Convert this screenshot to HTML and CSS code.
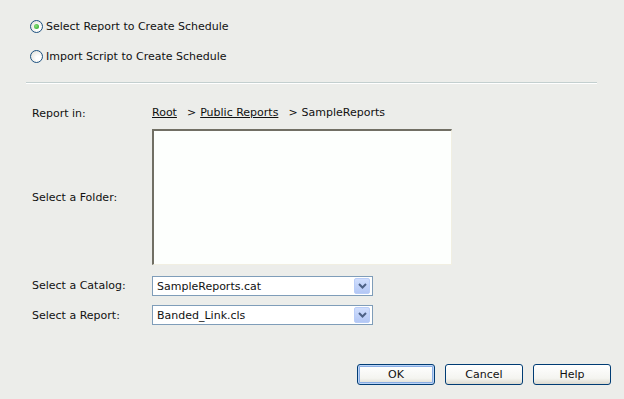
FILE: index.html
```html
<!DOCTYPE html>
<html lang="en">
<head>
  <meta charset="UTF-8" />
  <title>Create Schedule</title>
  <link rel="stylesheet" href="styles.css">
</head>
<body>

  <div class="choices">
    <label class="choice"><input type="radio" name="mode" checked> Select Report to Create Schedule</label>
    <label class="choice"><input type="radio" name="mode"> Import Script to Create Schedule</label>
  </div>

  <div class="divider"></div>

  <div class="form">
    <div class="label">Report in:</div>
    <div class="crumbs">
      <a href="#">Root</a><span class="sep">&gt;</span><a href="#">Public Reports</a><span class="sep">&gt;</span>SampleReports
    </div>

    <div class="label">Select a Folder:</div>
    <div class="folder-list"></div>

    <div class="label label-low">Select a Catalog:</div>
    <div class="select select-low">
      <span class="select-text">SampleReports.cat</span>
      <span class="select-arrow">
        <svg width="9" height="6" viewBox="0 0 9 6"><path d="M1 1 L4.5 4.5 L8 1" fill="none" stroke="#4d6185" stroke-width="2"/></svg>
      </span>
    </div>

    <div class="label">Select a Report:</div>
    <div class="select">
      <span class="select-text">Banded_Link.cls</span>
      <span class="select-arrow">
        <svg width="9" height="6" viewBox="0 0 9 6"><path d="M1 1 L4.5 4.5 L8 1" fill="none" stroke="#4d6185" stroke-width="2"/></svg>
      </span>
    </div>
  </div>

  <div class="actions">
    <button class="btn btn-default">OK</button>
    <button class="btn">Cancel</button>
    <button class="btn">Help</button>
  </div>

</body>
</html>
```

FILE: styles.css
```css
* { margin: 0; padding: 0; box-sizing: border-box; }

body {
  font-family: "DejaVu Sans", Verdana, sans-serif;
  font-size: 11px;
  background-color: #ecedea;
  color: #111;
  padding-top: 20px;
}

.choices {
  display: flex;
  flex-direction: column;
  gap: 17px;
  padding-left: 30px;
}

.choice {
  display: flex;
  align-items: center;
  gap: 3px;
  height: 13px;
  line-height: 13px;
}

.choice input {
  appearance: none;
  width: 13px;
  height: 13px;
  border: 1px solid #1c5180;
  border-radius: 50%;
  background: radial-gradient(circle at 65% 65%, #ffffff 20%, #dcdcd4 100%);
  position: relative;
  flex-shrink: 0;
}

.choice input:checked::after {
  content: "";
  position: absolute;
  left: 3px;
  top: 3px;
  width: 5px;
  height: 5px;
  border-radius: 50%;
  background: radial-gradient(circle at 40% 40%, #8ae07b, #21a121);
}

.divider {
  margin: 19px 0 0 26px;
  width: 571px;
  height: 2px;
  border-top: 1px solid #c3cfcf;
  border-bottom: 1px solid #ffffff;
}

.form {
  display: grid;
  grid-template-columns: 120px 300px;
  grid-template-rows: 14px 136px 22px 20px;
  row-gap: 9px;
  align-items: center;
  padding-left: 32px;
  margin-top: 22px;
}

.label-low,
.select-low { align-self: end; }

.label-low { line-height: 20px; }

.crumbs {
  white-space: nowrap;
  line-height: 14px;
}

.crumbs a {
  color: #111;
  text-decoration: underline;
}

.sep {
  margin: 0 4px 0 10px;
}

.folder-list {
  height: 136px;
  background-color: #fdfffd;
  border-top: 2px solid #716f64;
  border-left: 2px solid #716f64;
  border-right: 1px solid #f1efe2;
  border-bottom: 1px solid #f1efe2;
}

.select {
  width: 221px;
  height: 20px;
  background-color: #ffffff;
  border: 1px solid #7f9db9;
  display: flex;
  align-items: center;
  justify-content: space-between;
  padding: 1px;
}

.select-text {
  padding-left: 3px;
}

.select-arrow {
  width: 16px;
  height: 16px;
  border: 1px solid #b9cdf8;
  border-radius: 2px;
  background: linear-gradient(#d0defd, #b3c7f5);
  display: flex;
  align-items: center;
  justify-content: center;
  margin-right: 1px;
}

.actions {
  display: flex;
  justify-content: flex-end;
  gap: 10px;
  padding-right: 13px;
  margin-top: 39px;
}

.btn {
  width: 78px;
  height: 21px;
  font-family: "DejaVu Sans", Verdana, sans-serif;
  font-size: 11px;
  color: #111;
  border: 1px solid #003c74;
  border-radius: 3px;
  background: linear-gradient(#ffffff, #f4f4f0 70%, #dcdad0);
  cursor: pointer;
}

.btn-default {
  box-shadow: inset 0 0 0 1px #bcd4f6, inset 0 0 0 2px #89ade4;
}
```
